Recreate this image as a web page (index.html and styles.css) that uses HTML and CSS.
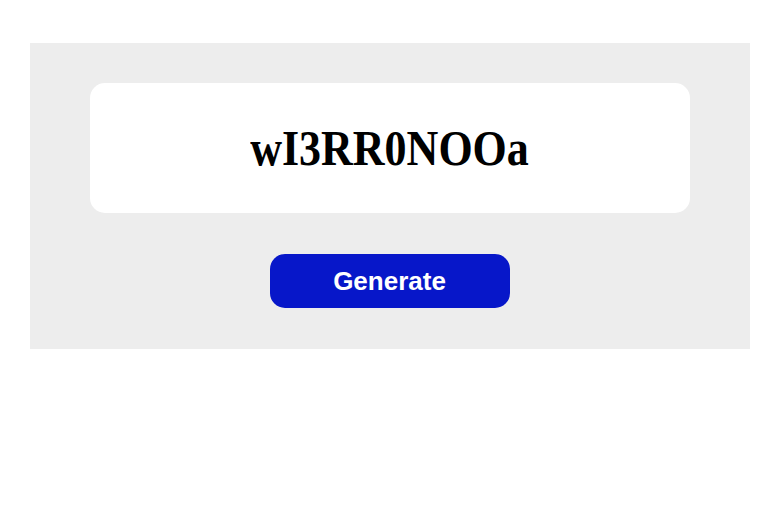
FILE: index.html
```html
<!DOCTYPE html>
<html>
<head>
<meta charset="utf-8">
<link rel="stylesheet" href="styles.css">
</head>
<body>
<div class="panel">
  <div class="card"><span class="code">wI3RR0NOOa</span></div>
  <button class="gen">Generate</button>
</div>
</body>
</html>
```
FILE: styles.css
```css
html, body { margin: 0; padding: 0; background: #fff; }
.panel {
  width: 720px;
  margin: 43px auto 0;
  box-sizing: border-box;
  padding: 40px 90px 41px;
  background: #ededed;
  display: flex;
  flex-direction: column;
  align-items: center;
  gap: 41px;
}
.card {
  width: 600px;
  height: 130px;
  background: #fff;
  border-radius: 15px;
  display: flex;
  align-items: center;
  justify-content: center;
}
.code {
  display: inline-block;
  font-family: "Liberation Serif", "Times New Roman", serif;
  font-weight: bold;
  font-size: 44px;
  line-height: 1;
  color: #000;
  transform: scaleY(1.14);
  margin-top: 2px;
}
.gen {
  width: 240px;
  height: 54px;
  border: none;
  border-radius: 15px;
  background: #0717c9;
  color: #fff;
  font-family: "Liberation Sans", Arial, sans-serif;
  font-weight: bold;
  font-size: 26px;
  padding: 0;
}
```
